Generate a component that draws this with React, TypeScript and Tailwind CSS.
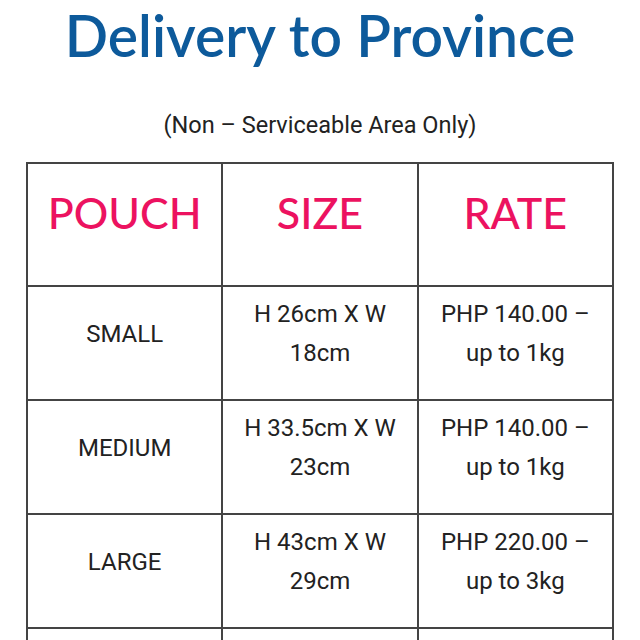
const rows = [
  { pouch: 'SMALL', size: ['H 26cm X W', '18cm'], rate: ['PHP 140.00 –', 'up to 1kg'] },
  { pouch: 'MEDIUM', size: ['H 33.5cm X W', '23cm'], rate: ['PHP 140.00 –', 'up to 1kg'] },
  { pouch: 'LARGE', size: ['H 43cm X W', '29cm'], rate: ['PHP 220.00 –', 'up to 3kg'] },
]

function Lines({ lines }: { lines: string[] }) {
  return (
    <div className="mb-[18px]">
      {lines.map((l) => (
        <div key={l}>{l}</div>
      ))}
    </div>
  )
}

export default function App() {
  return (
    <div className="w-[640px] h-[640px] overflow-hidden bg-white">
      {/* title */}
      <h1 className="pt-[1px] text-center text-[57px] leading-[68px] font-semibold text-[#0d5a9b] font-['Lato',sans-serif]">
        Delivery to Province
      </h1>
      <p className="mt-[42px] text-center text-[23.5px] leading-[28px] text-[#222] font-['Roboto',sans-serif]">
        (Non – Serviceable Area Only)
      </p>

      {/* rate table */}
      <table className="mt-[23px] ml-[26px] w-[588px] table-fixed border-collapse border-2 border-[#444] font-['Roboto',sans-serif] text-[24px] leading-[39px] text-[#222]">
        <thead>
          <tr className="h-[123px]">
            {['POUCH', 'SIZE', 'RATE'].map((h) => (
              <th
                key={h}
                className="border-2 border-[#444] align-middle text-center font-medium text-[43px] leading-[50px] text-[#ec1260] font-['Lato',sans-serif]"
              >
                <div className="mb-[24px]">{h}</div>
              </th>
            ))}
          </tr>
        </thead>
        <tbody>
          {rows.map((r) => (
            <tr key={r.pouch} className="h-[114px]">
              <td className="border-2 border-[#444] text-center align-middle">
                <Lines lines={[r.pouch]} />
              </td>
              <td className="border-2 border-[#444] text-center align-middle">
                <Lines lines={r.size} />
              </td>
              <td className="border-2 border-[#444] text-center align-middle">
                <Lines lines={r.rate} />
              </td>
            </tr>
          ))}
          <tr className="h-[114px]">
            <td className="border-2 border-[#444]"></td>
            <td className="border-2 border-[#444]"></td>
            <td className="border-2 border-[#444]"></td>
          </tr>
        </tbody>
      </table>
    </div>
  )
}
